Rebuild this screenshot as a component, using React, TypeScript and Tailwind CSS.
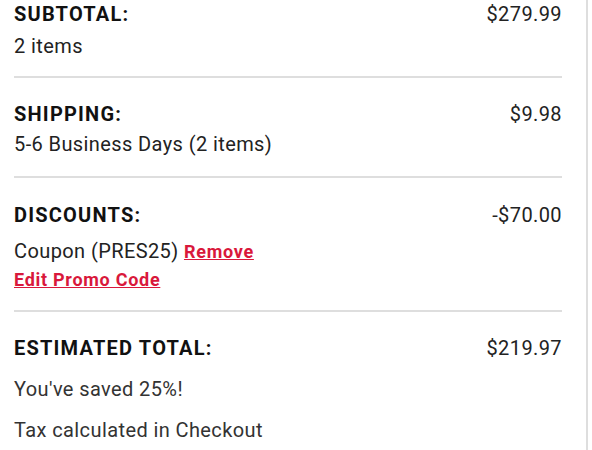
const font = { fontFamily: "Roboto, 'Liberation Sans', sans-serif" };

function Heading({ label, value }: { label: string; value: string }) {
  return (
    <div className="flex items-start justify-between">
      <h3 className="text-[20px] leading-6 font-bold tracking-[0.06em] text-[#111]">{label}</h3>
      <span className="text-[20px] leading-6 tracking-[0.02em] text-[#222]">{value}</span>
    </div>
  );
}

export default function App() {
  return (
    <div className="min-h-[450px] bg-white" style={font}>
      <div className="w-[588px] min-h-[450px] border-r-2 border-[#dedede] pl-[14px] pr-6">
        {/* subtotal */}
        <section className="pt-[2px] pb-[18px] border-b-2 border-[#dedede]">
          <Heading label="SUBTOTAL:" value="$279.99" />
          <p className="mt-2 text-[20px] leading-6 tracking-[0.02em] text-[#222]">2 items</p>
        </section>

        {/* shipping */}
        <section className="pt-6 pb-5 border-b-2 border-[#dedede]">
          <Heading label="SHIPPING:" value="$9.98" />
          <p className="mt-[6px] text-[20px] leading-6 tracking-[0.02em] text-[#222]">
            5-6 Business Days (2 items)
          </p>
        </section>

        {/* discounts */}
        <section className="pt-[25px] pb-[18px] border-b-2 border-[#dedede]">
          <Heading label="DISCOUNTS:" value="-$70.00" />
          <p className="mt-3 text-[20px] leading-6 tracking-[0.02em] text-[#222]">
            Coupon (PRES25){" "}
            <a href="#" className="text-[18px] font-bold tracking-[0.04em] text-[#d9183b] underline">
              Remove
            </a>
          </p>
          <a
            href="#"
            className="block mt-1 text-[18px] leading-6 font-bold tracking-[0.04em] text-[#d9183b] underline"
          >
            Edit Promo Code
          </a>
        </section>

        {/* total */}
        <section className="pt-6 pb-4">
          <Heading label="ESTIMATED TOTAL:" value="$219.97" />
          <p className="mt-[17px] text-[20px] leading-6 tracking-[0.02em] text-[#333]">You've saved 25%!</p>
          <p className="mt-[17px] text-[20px] leading-6 tracking-[0.02em] text-[#333]">
            Tax calculated in Checkout
          </p>
        </section>
      </div>
    </div>
  );
}
